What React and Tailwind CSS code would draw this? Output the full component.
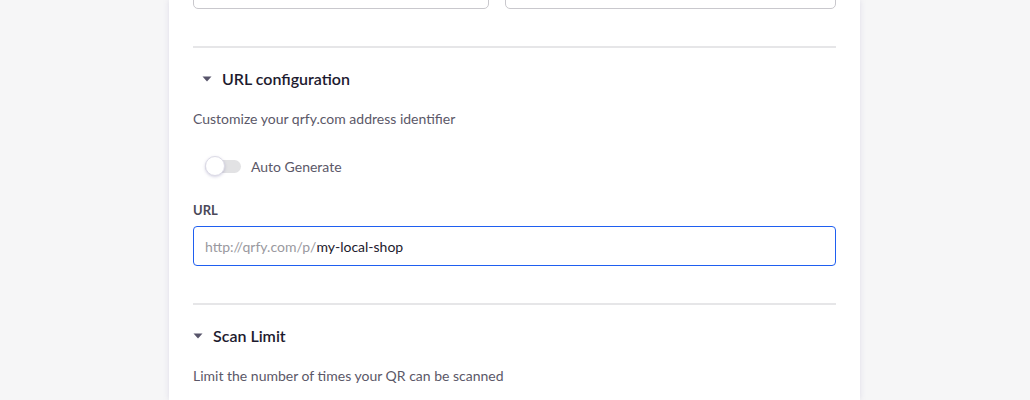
import React from 'react';

function Caret() {
  return (
    <svg width="10" height="6" viewBox="0 0 10 6" className="shrink-0">
      <path d="M0.5 0.5 L9.5 0.5 L5 5.5 Z" fill="#57546a" />
    </svg>
  );
}

function SectionHeader({ title, indent }) {
  return (
    <div className={`flex items-center h-6 ${indent ? 'pl-[9px]' : ''}`}>
      <Caret />
      <span className="ml-[10px] text-[16px] font-semibold text-[#1d1a2e]">{title}</span>
    </div>
  );
}

export default function App() {
  return (
    <div
      className="w-[1030px] h-[400px] overflow-hidden bg-[#f6f6f7] flex justify-center"
      style={{ fontFamily: 'Lato, "Open Sans", sans-serif' }}
    >
      <div className="ml-[-1px] w-[691px] h-full bg-white shadow-[0_0_6px_rgba(120,110,170,0.18)] px-[24px] flex flex-col">
        <div className="mt-[-31px] grid grid-cols-[296px_1fr] gap-[16px]">
          <div className="h-10 border border-[#c9c8cd] rounded-[5px]" />
          <div className="h-10 border border-[#c9c8cd] rounded-[5px]" />
        </div>

        <div className="mt-[37px] h-[2px] bg-[#e6e6e8]" />

        <div className="pt-[19px]">
          <SectionHeader title="URL configuration" indent />
          <p className="mt-[18px] text-[14px] leading-5 text-[#5b5868]">
            Customize your qrfy.com address identifier
          </p>
          <div className="mt-[27px] flex items-center h-5 pl-[12px]">
            <div className="relative w-[36px] h-[13px] rounded-full bg-[#e2e2e4]">
              <div className="absolute left-0 top-[-4px] w-[20px] h-[20px] rounded-full bg-white border border-[#dcdbe6] shadow-[0_1px_3px_rgba(80,70,140,0.25)]" />
            </div>
            <span className="ml-[10px] text-[14px] text-[#5b5868]">Auto Generate</span>
          </div>
          <div className="mt-[26px] text-[13px] leading-4 font-bold text-[#4b4959]">URL</div>
          <div className="mt-[8px] h-10 border border-[#1f5ff0] rounded-[4px] flex items-center px-[11px] text-[14px]">
            <span className="text-[#9a99a0]">http://qrfy.com/p/</span>
            <span className="text-[#1d1a2e]">my-local-shop</span>
          </div>
        </div>

        <div className="mt-[37px] h-[2px] bg-[#e6e6e8]" />

        <div className="pt-[19px]">
          <SectionHeader title="Scan Limit" />
          <p className="mt-[18px] text-[14px] leading-5 text-[#5b5868]">
            Limit the number of times your QR can be scanned
          </p>
        </div>
      </div>
    </div>
  );
}
